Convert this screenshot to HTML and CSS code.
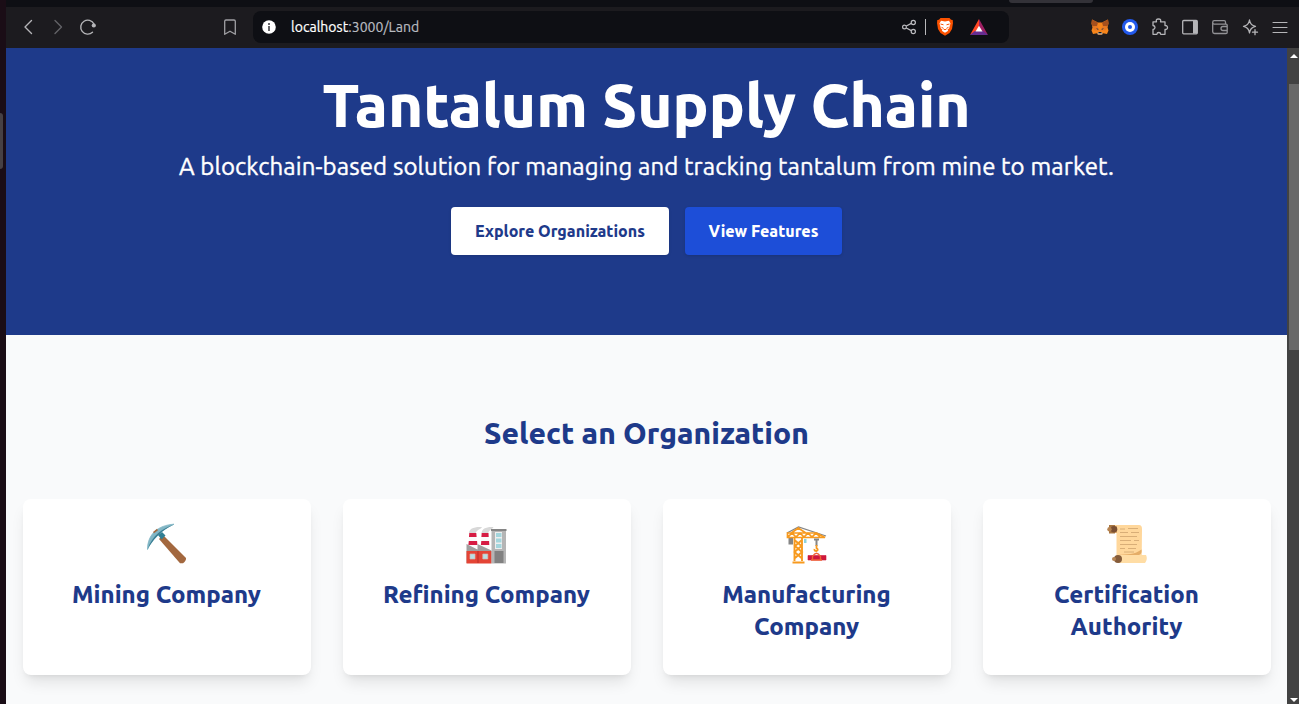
FILE: index.html
```html
<!DOCTYPE html>
<html lang="en">
<head>
<meta charset="utf-8">
<title>Tantalum Supply Chain</title>
<link rel="stylesheet" href="styles.css">
</head>
<body>
<div class="desktop">
  <div class="dock"><div class="dock-handle"></div></div>
  <div class="browser">
    <div class="tabstrip"><div class="tab-edge"></div></div>
    <header class="toolbar">
      <svg class="nav-icons" width="100" height="41" viewBox="6 7 100 41" fill="none" stroke-linecap="round" stroke-linejoin="round">
        <path d="M31.500 20.500L25 27l6.500 6.500" stroke="#b5b5b8" stroke-width="1.400"/>
        <path d="M55 20.500L61.500 27 55 33.500" stroke="#626267" stroke-width="1.400"/>
        <path d="M92.500 32.300A7 7 0 1 1 94 24" stroke="#b5b5b8" stroke-width="1.400"/>
        <circle cx="93.800" cy="25.500" r="2.100" fill="#b5b5b8"/>
      </svg>
      <svg class="bookmark" width="14" height="17" viewBox="0 0 14 17" fill="none" stroke="#a0a0a4" stroke-width="1.300" stroke-linejoin="round"><path d="M3 1h8q1.300 0 1.300 1.300V15.300L7 12.200l-5.300 3.100V2.300Q1.700 1 3 1z"/></svg>
      <div class="address">
        <svg width="14" height="14" viewBox="0 0 14 14"><circle cx="7" cy="7" r="6.800" fill="#fff"/><path d="M6 6h2v5H6zM6 3h2v2H6z" fill="#66666a"/></svg>
        <div class="url"><span class="host">localhost</span>:3000/Land</div>
        <svg class="address-icons" width="90" height="28" viewBox="900 13 90 28">
          <g fill="none" stroke="#bcbcc0" stroke-width="1.200"><circle cx="904.500" cy="27" r="1.900"/><circle cx="913.300" cy="22.500" r="2.100"/><circle cx="913.300" cy="31.500" r="2.100"/><path d="M906.300 26l5-2.600M906.300 28l5 2.600"/></g>
          <path d="M925.500 19v16" stroke="#b8b8bb"/>
          <path d="M940.500 18h9l1.500 1.700 1.700.2.300 3-1 6.100-2.500 4-4.500 2.800-4.500-2.800-2.500-4-1-6.100.3-3 1.700-.2z" fill="#fb5200"/>
          <path d="M941 20.800l4 .6 4-.6 1.500 2.700-.8 2.500-.5 2.200-1.700 1.600.7 1-3.200 2-3.200-2 .7-1-1.700-1.600-.5-2.200-.8-2.500z" fill="#fff"/>
          <path d="M940.500 24l3 .8M949.500 24l-3 .8M941.500 27.300l2 1M948.500 27.300l-2 1M943.500 29l1.500.8 1.500-.8" stroke="#fb5200" stroke-width="1" fill="none"/>
          <path d="M979 19l-9 16 9-5.500z" fill="#ff4724"/><path d="M979 19l9 16-9-5.500z" fill="#9e1f63"/><path d="M970 35h18l-4.800-4h-8.400z" fill="#662d91"/><path d="M979 25.700l3.500 5.800h-7z" fill="#fff"/>
        </svg>
      </div>
      <svg class="extensions" width="202" height="28" viewBox="1088 13 202 28" fill="none" stroke="#b5b5b8" stroke-width="1.300" stroke-linecap="round" stroke-linejoin="round">
        <g stroke="none"><path d="M1092 19.500l6 3h4l6-3 .500 4-1 4 1 3-1.500 3.500-4-.8-1.500 1.600h-3l-1.500-1.600-4 .8-1.500-3.500 1-3-1-4z" fill="#f6851b"/><path d="M1092 19.500l6 3-1 3.500-4.500.5-1-3zM1108 19.500l-6 3 1 3.500 4.500.5 1-3z" fill="#a6501d"/><path d="M1092.500 26.500l5-.5 2.500 6 2.500-6 5 .5-2 4h-11z" fill="#e87924"/><path d="M1096 28l2.500 1-.5 1zM1104 28l-2.500 1 .5 1z" fill="#233447"/><path d="M1098 32h4l.5 2.500h-5z" fill="#c0ad9e"/><path d="M1098.500 32h3v1.200h-3z" fill="#161616"/></g>
        <g stroke="none"><circle cx="1130" cy="27" r="8" fill="#2259eb"/><circle cx="1130" cy="27" r="5" fill="#fff"/><circle cx="1130" cy="27" r="2" fill="#2259eb"/></g>
        <path d="M1153 21.800h3.500q-1-2.800 2-2.800t2 2.800h4.500v3.700q2.500-.2 2.500 2t-2.500 2v4.800h-4.300q-.1-1.800-1.900-1.800t-1.900 1.800H1153v-4.800q2-.2 2-2t-2-2z"/>
        <rect x="1182.700" y="20.500" width="14.600" height="13.300" rx="1"/><path d="M1193 21h4v12.500h-4z" fill="#b5b5b8" stroke="none"/>
        <g stroke="#929296"><path d="M1225.500 24v-2q0-1.300-1.300-1.300h-10q-1.500 0-1.500 1.700t1.500 1.700h12q1 0 1 1.200v7q0 1.200-1.200 1.200h-11.500q-1.800 0-1.800-1.700V22.500M1227 26.500h-4q-2 0-2 2t2 2h4"/></g>
        <path d="M1249.500 20q.8 5.300 6 6.400-5.200 1.100-6 6.400-.8-5.300-6-6.400 5.200-1.100 6-6.400zM1255 29.700v5M1252.500 32.200h5"/>
        <path d="M1273 22.500h14M1273 27.500h14M1273 32.500h14" stroke-width="1.100"/>
      </svg>
    </header>
    <div class="viewport">
      <main class="page">
        <section class="hero">
          <h1>Tantalum Supply Chain</h1>
          <p>A blockchain-based solution for managing and tracking tantalum from mine to market.</p>
          <div class="actions"><a class="btn btn-light"><span>Explore Organizations</span></a><a class="btn btn-blue"><span>View Features</span></a></div>
        </section>
        <section class="organizations">
          <h2>Select an Organization</h2>
          <div class="cards">
            <article class="card">
              <svg class="card-icon" viewBox="142 520 48 48"><path d="M163 535l23 23q.5 2.500-3 5.300h-3L159 539z" fill="#a3683f"/><path d="M158 535l4-3 3.500 3.500-4 4z" fill="#317f93"/><path d="M174 524.200c-16 1-26.500 10-26.500 25.300 5-12 13-19.500 26.500-25.300z" fill="#82b6c5" stroke="#82b6c5" stroke-width=".8"/><path d="M174 524.500c-11 3.500-22 11-26.500 25 5-9 13-19 26.500-25z" fill="#397f94"/><path d="M153 532l4-3.300 1 1.500-4 3z" fill="#a3683f"/></svg>
              <h3>Mining Company</h3>
            </article>
            <article class="card">
              <svg class="card-icon" viewBox="462.500 520 48 48"><path d="M469.500 533.500c0-5 5-7 13-6.500-1 2.500-5 2-6.500 6.500zM482 533.500c0-5 5-7 12-6.500-1 2.500-4 2-5.500 6.500z" fill="#d8d8d8"/><path d="M470 533h6.500l1.500 15h-9.500zM482.300 533h6.500l1 15H481z" fill="#fafafa"/><path d="M469.800 533h7l.3 4h-7.600zM469.300 541h8.300l.3 4h-9zM482.200 533h6.800l.2 4h-7.300zM481.800 541h7.800l.2 4h-8.400z" fill="#d61c43"/><path d="M467 544l11 5.500V544l14 6.500V563h-25z" fill="#9f9f9f"/><path d="M467 551h25v12.500h-25z" fill="#e44435"/><path d="M478.500 551v12" stroke="#b92f2b"/><path d="M470.500 554h5v5h-5zM483.300 554h5v5h-5z" fill="#b8e0e4" stroke="#d5b8b0" stroke-width=".7"/><path d="M492 530h14.500v33.500H492z" fill="#b5b5b5"/><path d="M491.500 529h15.500v2h-15.500z" fill="#858585"/><path d="M495.500 532h7v17h-7z" fill="#eee"/><path d="M496.500 533h5.500v4h-5.500zM496.500 538.500h5.500v4h-5.500zM496.500 544h5.500v4h-5.500z" fill="#a3d5dc"/><path d="M495 551h9v12h-9z" fill="#818181"/></svg>
              <h3>Refining Company</h3>
            </article>
            <article class="card">
              <svg class="card-icon" viewBox="782 520 48 48" fill="none" stroke="#f79a1f"><path d="M787 533l11.500-6 27.500 9" stroke="#858585" stroke-width="1.300"/><path d="M788.500 538h4.500v6.500h-4.500z" fill="#858585" stroke="none"/><path d="M787.500 533h29l8.500 4.500h-37.500zM798.300 528l-7 5h14.500zM788 537l4-4 4 4 4-4 4 4 4-4 4 4 4-4 4 4" stroke-width="1.700"/><path d="M804 539h2.500v4H804z" fill="#8ed2dc" stroke="none"/><path d="M794.500 538v23M802 538v23M794.500 540l7 6-7 6 7 6M802 540l-7 6 7 6-7 6M792.500 562.500h12" stroke-width="1.900"/><path d="M814 539.500h5M816.500 540v6" stroke="#858585" stroke-width="2"/><path d="M816.500 545v3q2.500 2 0 3-2.500 0-2-2" stroke-width="1.800"/><path d="M808 555.500h18v4.500H808z" fill="#cf173b" stroke="#cf173b" stroke-width=".6"/><path d="M812.500 560v-3.500q4-6.500 8 0v3.500M811 560h11" stroke="#ef6236" stroke-width="1.400"/></svg>
              <h3>Manufacturing<br>Company</h3>
            </article>
            <article class="card">
              <svg class="card-icon" viewBox="1102 520 48 48"><path d="M1112 525h27q3 0 3 4l-.3 29h-25.200V533h-5z" fill="#ffd79b"/><path d="M1116 533V526" stroke="#d7a365" stroke-width="1.500"/><path d="M1109 525h6v8.500h-6z" fill="#a87642"/><circle cx="1114" cy="529.300" r="3.300" fill="#7a4f33"/><circle cx="1109.500" cy="529.200" r="2.200" fill="#b68350"/><path d="M1118 555h28q2 4-1 8h-27z" fill="#ffdda5"/><path d="M1118 555h21q3-1 2.600-5.500-6 4-11 4.500z" fill="#e5ad67"/><circle cx="1118" cy="559" r="4" fill="#855c3a"/><circle cx="1114" cy="559" r="2" fill="#b58453"/><path d="M1120 529h5M1128 528.500h10M1120 532.500h8M1131 532.500h8M1120 536.500h17M1120 540.500h11M1134 540.500h5M1120 544.500h17M1120 548.500h5M1128 548.500h8M1124 552h10" stroke="#d9ae77" stroke-width="1"/></svg>
              <h3>Certification<br>Authority</h3>
            </article>
          </div>
        </section>
      </main>
      <aside class="scrollbar"><i class="arrow up"></i><div class="thumb"></div><i class="arrow down"></i></aside>
    </div>
  </div>
</div>
</body>
</html>
```
FILE: styles.css
```css
* { box-sizing: border-box; }
body { margin: 0; font-family: Ubuntu, "Noto Sans", sans-serif; overflow: hidden; }
h1, h2, h3, p { margin: 0; white-space: nowrap; }
svg { display: block; flex: none; }
.desktop { display: flex; width: 1299px; height: 704px; background: #1a0d16; }
.dock { width: 6px; padding-top: 113px; }
.dock-handle { width: 3px; height: 56px; background: #464044; border-radius: 0 3px 3px 0; }
.browser { flex: 1; display: flex; flex-direction: column; }
.tabstrip { height: 7px; background: #0e0f14; padding-left: 1003px; }
.tab-edge { width: 84px; height: 3px; background: #333238; border-radius: 0 0 6px 6px; }
.toolbar { height: 41px; background: #1c1b1f; display: flex; align-items: center; }
.bookmark { margin-left: 117px; }
.address { width: 756px; height: 32px; margin-left: 16px; margin-bottom: 1px; padding-left: 9px; border-radius: 8px; background: #0e0f14; display: flex; align-items: center; }
.url { width: 140px; margin-left: 15px; color: #b8bbc0; font-size: 14px; letter-spacing: .03px; -webkit-text-stroke: .2px; }
.host { color: #fff; }
.address-icons { margin-left: 469px; }
.extensions { margin-left: 79px; margin-bottom: 1px; }
.viewport { height: 656px; display: flex; }
.page { width: 1281px; background: #f9fafb; overflow: hidden; }
.hero { height: 287px; padding-top: 27px; background: #1e3a8a; color: #fff; display: flex; flex-direction: column; align-items: center; }
h1 { font-size: 60px; line-height: 60px; font-weight: 800; }
.hero p { font-size: 24px; line-height: 32px; margin-top: 16px; letter-spacing: .12px; -webkit-text-stroke: .4px; }
.actions { display: flex; gap: 16px; margin-top: 24px; }
.btn { height: 48px; border-radius: 4px; display: flex; align-items: center; justify-content: center; white-space: nowrap; font-size: 16px; font-weight: 800; box-shadow: 0 1px 3px #0002; }
.btn-light { width: 218px; background: #fff; color: #1e3a8a; }
.btn-blue { width: 157px; background: #1d4ed8; }
.organizations { padding: 80px 16.5px 0; text-align: center; color: #1e3a8a; }
h2 { font-size: 30px; line-height: 36px; font-weight: 800; }
.cards { display: grid; grid-template-columns: repeat(4, 288px); gap: 32px; margin-top: 48px; }
.card { height: 176px; padding-top: 21px; background: #fff; border-radius: 8px; box-shadow: 0 10px 15px -3px #0000001a, 0 4px 6px -4px #0000001a; }
.card-icon { width: 48px; height: 48px; margin: 0 auto 11px 119.5px; }
h3 { font-size: 24px; line-height: 32px; font-weight: 800; }
.scrollbar { width: 12px; background: #424242; display: flex; flex-direction: column; align-items: flex-end; }
.thumb { width: 10px; height: 266px; margin-top: 26px; background: #686868; }
.arrow { width: 0; height: 0; border: 4px solid transparent; margin-right: 1px; }
.up { border-top: 0; border-bottom: 4px solid #fff; margin-top: 6px; }
.down { border-bottom: 0; border-top: 4px solid #fff; margin-top: auto; margin-bottom: 2px; }
```
